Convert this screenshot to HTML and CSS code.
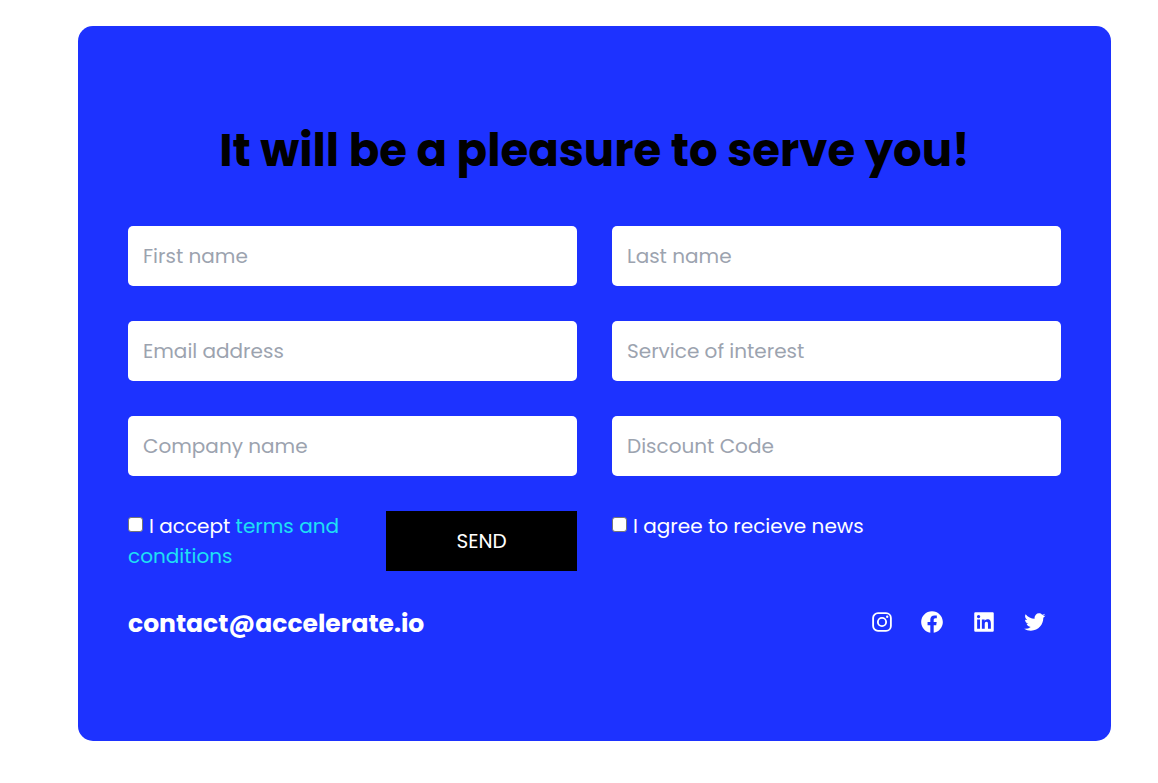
FILE: index.html
```html
<!DOCTYPE html>
<html lang="en">
<head>
<meta charset="utf-8">
<title>Contact</title>
<link rel="stylesheet" href="styles.css">
</head>
<body>
<main class="card">
  <h1 class="title">It will be a pleasure to serve you!</h1>
  <form class="form">
    <input class="field" type="text" placeholder="First name">
    <input class="field" type="text" placeholder="Last name">
    <input class="field" type="text" placeholder="Email address">
    <input class="field" type="text" placeholder="Service of interest">
    <input class="field" type="text" placeholder="Company name">
    <input class="field" type="text" placeholder="Discount Code">
    <div class="accept">
      <label class="terms"><input class="check" type="checkbox">I accept <a class="link">terms and</a> <a class="link">conditions</a></label>
      <button class="send" type="button">SEND</button>
    </div>
    <label class="news"><input class="check" type="checkbox">I agree to recieve news</label>
  </form>
  <footer class="footer">
    <span class="mail">contact@accelerate.io</span>
    <div class="social">
      <svg class="icon" viewBox="0 0 24 24"><rect x="3.8" y="3.8" width="16.4" height="16.4" rx="4.5" fill="none" stroke="currentColor" stroke-width="1.7"/><circle cx="12" cy="12" r="3.8" fill="none" stroke="currentColor" stroke-width="1.7"/><circle cx="16.8" cy="7.2" r="1.1"/></svg>
      <svg class="icon icon-facebook" viewBox="0 0 24 24"><path d="M12.001 2.002c-5.522 0-9.999 4.477-9.999 9.999 0 4.99 3.656 9.126 8.437 9.879v-6.988h-2.54v-2.891h2.54V9.798c0-2.508 1.493-3.891 3.776-3.891 1.094 0 2.24.195 2.24.195v2.459h-1.264c-1.24 0-1.628.772-1.628 1.563v1.875h2.771l-.443 2.891h-2.328v6.988C18.344 21.129 22 16.992 22 12.001c0-5.522-4.477-9.999-9.999-9.999z"/></svg>
      <svg class="icon" viewBox="0 0 24 24"><path d="M20 3H4a1 1 0 0 0-1 1v16a1 1 0 0 0 1 1h16a1 1 0 0 0 1-1V4a1 1 0 0 0-1-1zM8.339 18.337H5.667v-8.59h2.672v8.59zM7.003 8.574a1.548 1.548 0 1 1 0-3.096 1.548 1.548 0 0 1 0 3.096zm11.335 9.763h-2.669V14.16c0-.996-.018-2.277-1.388-2.277-1.39 0-1.601 1.086-1.601 2.207v4.248h-2.667v-8.59h2.56v1.174h.037c.355-.675 1.227-1.387 2.524-1.387 2.704 0 3.203 1.778 3.203 4.092v4.71z"/></svg>
      <svg class="icon" viewBox="0 0 24 24"><path d="M19.633 7.997c.013.175.013.349.013.523 0 5.325-4.053 11.461-11.46 11.461-2.282 0-4.402-.661-6.186-1.809.324.037.636.05.973.05a8.07 8.07 0 0 0 5.001-1.721 4.036 4.036 0 0 1-3.767-2.793c.249.037.499.062.761.062.361 0 .724-.05 1.061-.137a4.027 4.027 0 0 1-3.23-3.953v-.05c.537.299 1.16.486 1.82.511a4.022 4.022 0 0 1-1.796-3.354c0-.748.199-1.434.548-2.032a11.457 11.457 0 0 0 8.306 4.215c-.062-.3-.1-.611-.1-.923a4.026 4.026 0 0 1 4.028-4.028c1.16 0 2.207.486 2.943 1.272a7.957 7.957 0 0 0 2.556-.973 4.02 4.02 0 0 1-1.771 2.22 8.073 8.073 0 0 0 2.319-.624 8.645 8.645 0 0 1-2.019 2.083z"/></svg>
    </div>
  </footer>
</main>
</body>
</html>
```

FILE: styles.css
```css
* { box-sizing: border-box; }
body {
  margin: 0;
  background: #fff;
  font-family: Poppins, "Open Sans", sans-serif;
  font-size: 20px;
  line-height: 30px;
  color: #fff;
}
.card {
  width: 1033px;
  height: 715px;
  margin: 26px 0 0 78px;
  padding: 90px 50px 0;
  border-radius: 15px;
  background: #1d32ff;
}
.title {
  margin: 0 0 41px;
  text-align: center;
  font-size: 45px;
  line-height: 69px;
  font-weight: 700;
  color: #000;
  white-space: nowrap;
}
.form {
  display: grid;
  grid-template-columns: 1fr 1fr;
  gap: 35px;
}
.field {
  width: 100%;
  height: 60px;
  padding: 0 15px;
  border: 0;
  border-radius: 5px;
  background: #fff;
  font: inherit;
}
.field::placeholder { color: #9ca3af; opacity: 1; }
.accept { display: flex; justify-content: space-between; }
.terms { width: 220px; }
.check {
  appearance: none;
  width: 15px;
  height: 15px;
  margin: 0 6px 0 0;
  border: 1px solid #767676;
  border-radius: 3px;
  background: #fff;
  vertical-align: 1px;
}
.link { color: #1ee0f5; }
.send {
  width: 191px;
  height: 60px;
  padding: 0;
  border: 0;
  background: #000;
  color: #fff;
  font: inherit;
}
.footer {
  display: flex;
  justify-content: space-between;
  align-items: flex-start;
  margin-top: 38px;
}
.mail { font-size: 25px; font-weight: 700; }
.social { display: flex; gap: 25px; padding-right: 13px; }
.icon { display: block; width: 26px; height: 26px; fill: currentColor; }
.icon-facebook { margin: 0 1px 0 -1px; }
```
